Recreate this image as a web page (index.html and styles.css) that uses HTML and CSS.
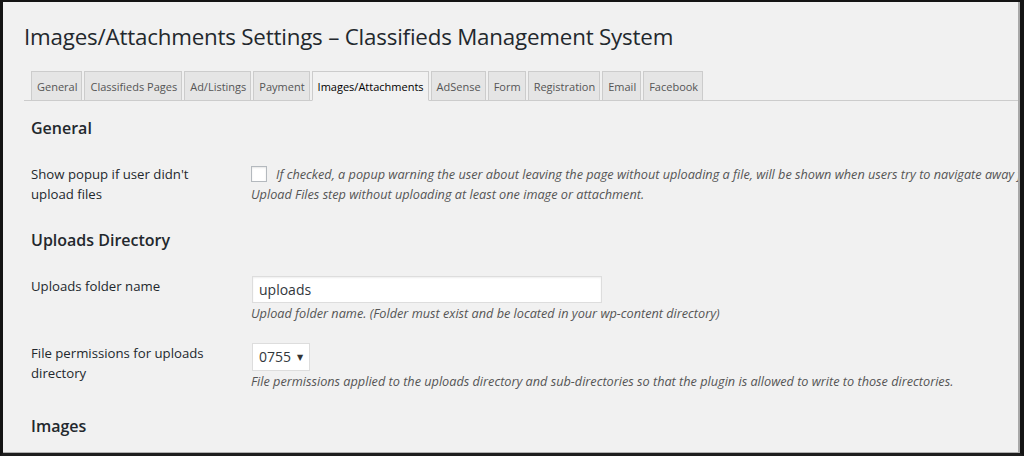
FILE: index.html
```html
<!DOCTYPE html>
<html>
<head>
<meta charset="utf-8">
<link rel="stylesheet" href="styles.css">
</head>
<body>
<div class="frame">
  <div class="screen">
    <div class="wrap">
      <h1 class="title">Images/Attachments Settings – Classifieds Management System</h1>
      <nav class="tabs">
        <a class="tab">General</a>
        <a class="tab">Classifieds Pages</a>
        <a class="tab">Ad/Listings</a>
        <a class="tab">Payment</a>
        <a class="tab active">Images/Attachments</a>
        <a class="tab">AdSense</a>
        <a class="tab">Form</a>
        <a class="tab">Registration</a>
        <a class="tab">Email</a>
        <a class="tab">Facebook</a>
      </nav>
      <div class="content">
        <h2 class="section first">General</h2>
        <div class="row">
          <div class="label">Show popup if user didn't<br>upload files</div>
          <div class="field">
            <p class="desc nowrap"><span class="checkbox"></span>If checked, a popup warning the user about leaving the page without uploading a file, will be shown when users try to navigate away from the<br>Upload Files step without uploading at least one image or attachment.</p>
          </div>
        </div>

        <h2 class="section">Uploads Directory</h2>
        <div class="row">
          <div class="label">Uploads folder name</div>
          <div class="field">
            <div class="input">uploads</div>
            <p class="desc">Upload folder name. (Folder must exist and be located in your wp-content directory)</p>
          </div>
        </div>
        <div class="row spaced">
          <div class="label">File permissions for uploads<br>directory</div>
          <div class="field">
            <div class="select"><span>0755</span><span class="arrow">▼</span></div>
            <p class="desc">File permissions applied to the uploads directory and sub-directories so that the plugin is allowed to write to those directories.</p>
          </div>
        </div>

        <h2 class="section last">Images</h2>
      </div>
    </div>
  </div>
</div>
</body>
</html>
```

FILE: styles.css
```css
html, body {
  margin: 0;
  padding: 0;
  background: #111;
  overflow: hidden;
}

.frame {
  width: 1024px;
  height: 456px;
  box-sizing: border-box;
  border-top: 2px solid #141414;
  border-left: 3px solid #141414;
  border-right: 4px solid #141414;
  border-bottom: 3px solid #1e1e1e;
  overflow: hidden;
}

.screen {
  height: 100%;
  box-sizing: border-box;
  background: #f1f1f1;
  border-right: 2px solid #a8a8a8;
  border-bottom: 1px solid #b0b0b0;
  overflow: hidden;
  font-family: "Open Sans", "Noto Sans", "DejaVu Sans", sans-serif;
  color: #23282d;
  font-size: 13.2px;
}

.wrap {
  padding-left: 21px;
  padding-top: 20px;
}

.title {
  margin: 0;
  font-size: 22.35px;
  font-weight: 400;
  line-height: 30px;
  color: #23282d;
  white-space: nowrap;
  letter-spacing: -0.2px;
}

.tabs {
  margin-top: 19px;
  display: flex;
  border-bottom: 1px solid #ccc;
  padding-left: 7px;
  margin-right: -40px;
}

.tab {
  display: flex;
  align-items: center;
  height: 30px;
  box-sizing: border-box;
  padding: 0 4px 0 5px;
  margin-right: 2px;
  margin-bottom: -1px;
  border: 1px solid #ccc;
  background: #e5e5e5;
  color: #555;
  font-size: 11px;
  white-space: nowrap;
}

.tab.active {
  background: #f1f1f1;
  border-bottom-color: #f1f1f1;
  color: #000;
}

.content {
  padding-left: 7px;
}

.section {
  margin: 24px 0 24px;
  font-size: 16px;
  font-weight: 600;
  line-height: 24px;
  color: #23282d;
}

.section.first {
  margin-top: 15px;
}

.section.last {
  margin-top: 23px;
}

.row {
  display: grid;
  grid-template-columns: 220px 1fr;
  line-height: 20px;
}

.row.spaced {
  margin-top: 20px;
}

.label {
  color: #23282d;
}

.field {
  min-width: 0;
}

.desc {
  margin: 0;
  font-style: italic;
  color: #555;
  font-size: 12.7px;
  line-height: 20px;
}

.nowrap {
  white-space: nowrap;
}

.checkbox {
  display: inline-block;
  width: 16px;
  height: 16px;
  box-sizing: border-box;
  border: 1px solid #b4b9be;
  background: #fff;
  box-shadow: inset 0 1px 2px rgba(0, 0, 0, 0.1);
  vertical-align: top;
  margin-top: 2px;
  margin-right: 9px;
}

.input {
  width: 350px;
  height: 27px;
  box-sizing: border-box;
  margin-left: 1px;
  border: 1px solid #ddd;
  background: #fff;
  box-shadow: inset 0 1px 2px rgba(0, 0, 0, 0.07);
  padding-left: 6px;
  font-size: 14px;
  line-height: 25px;
  color: #32373c;
}

.select {
  display: flex;
  align-items: center;
  gap: 6px;
  width: 58px;
  height: 28px;
  box-sizing: border-box;
  margin-left: 1px;
  border: 1px solid #ddd;
  background: #fff;
  padding-left: 6px;
  font-size: 14px;
  color: #32373c;
}

.arrow {
  font-size: 8px;
  color: #333;
}
```
